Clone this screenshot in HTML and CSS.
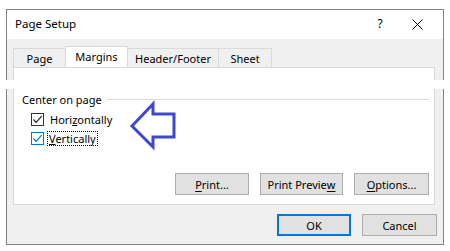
FILE: index.html
```html
<!DOCTYPE html>
<html>
<head>
<meta charset="utf-8">
<link rel="stylesheet" href="styles.css">
</head>
<body>
<div class="dialog">
  <div class="piece piece-top">
    <div class="titlebar">
      <span class="title">Page Setup</span>
      <span class="help">?</span>
      <span class="close">
        <svg width="11" height="11" viewBox="0 0 11 11"><path d="M0.5 0.5 L10.5 10.5 M10.5 0.5 L0.5 10.5" stroke="#000" stroke-width="1" fill="none"/></svg>
      </span>
    </div>
    <div class="tabs">
      <div class="tab tab-first">Page</div>
      <div class="tab tab-active">Margins</div>
      <div class="tab tab-hf">Header/Footer</div>
      <div class="tab tab-sheet">Sheet</div>
    </div>
    <div class="panel panel-top"></div>
  </div>
  <div class="tear"></div>
  <div class="piece piece-bottom">
    <div class="panel panel-bottom">
      <div class="group-head">
        <span class="group-label">Center on page</span>
        <span class="group-line"></span>
      </div>
      <div class="check-row check-first">
        <span class="box"><svg width="11" height="11" viewBox="0 0 11 11"><path d="M1.5 5.5 L4.2 8.3 L9.6 2.2" stroke="#222" stroke-width="1.2" fill="none"/></svg></span>
        <span class="check-label">Hori<u>z</u>ontally</span>
      </div>
      <div class="check-row">
        <span class="box box-blue"><svg width="11" height="11" viewBox="0 0 11 11"><path d="M1.5 5.5 L4.2 8.3 L9.6 2.2" stroke="#0078d7" stroke-width="1.2" fill="none"/></svg></span>
        <span class="check-label focus"><u>V</u>ertically</span>
      </div>
      <svg class="arrow" width="52" height="52" viewBox="0 0 52 52">
        <path d="M4 26 L25 4 L25 14 L46 14 L46 37 L25 37 L25 47 Z" fill="none" stroke="#3f48cc" stroke-width="3" stroke-linejoin="miter"/>
      </svg>
      <div class="panel-buttons">
        <button class="btn btn-print"><u>P</u>rint...</button>
        <button class="btn btn-preview">Print Previe<u>w</u></button>
        <button class="btn btn-options"><u>O</u>ptions...</button>
      </div>
    </div>
    <div class="footer">
      <button class="btn btn-ok">OK</button>
      <button class="btn btn-cancel">Cancel</button>
    </div>
  </div>
</div>
</body>
</html>
```

FILE: styles.css
```css
* { box-sizing: border-box; }
html, body { margin: 0; padding: 0; background: #fff; }
body {
  font-family: "Segoe UI", "Noto Sans", "Open Sans", sans-serif;
  font-size: 11px;
  color: #000;
  width: 450px;
  height: 251px;
  overflow: hidden;
}
.dialog {
  margin: 9px 0 0 6px;
  width: 438px;
}
.piece {
  background: #f0f0f0;
  border-left: 1px solid #828282;
  border-right: 1px solid #828282;
}
.piece-top {
  border-top: 1px solid #828282;
  height: 71px;
  display: flex;
  flex-direction: column;
}
.titlebar {
  background: #fff;
  height: 29px;
  display: flex;
  align-items: center;
  padding-left: 8px;
  flex: none;
  font-size: 12px;
}
.title { flex: 1; padding-bottom: 2px; font-size: 11.5px; }
.help { width: 14px; margin-right: 25px; text-align: center; padding-bottom: 2px; }
.close { width: 12px; margin-right: 19px; display: flex; align-items: center; }
.tabs {
  display: flex;
  align-items: flex-end;
  margin-top: 7px;
  padding-left: 6px;
  height: 21px;
  flex: none;
}
.tab {
  height: 19px;
  border: 1px solid #d9d9d9;
  border-bottom: none;
  background: #f0f0f0;
  display: flex;
  align-items: center;
  justify-content: center;
  margin-left: -1px;
}
.tab-first { width: 53px; margin-left: 0; }
.tab-active {
  height: 21px;
  width: 63px;
  background: #fff;
  position: relative;
  z-index: 1;
  padding-bottom: 2px;
}
.tab-hf { width: 92px; }
.tab-sheet { width: 54px; }
.panel {
  background: #fff;
  border-left: 1px solid #d9d9d9;
  border-right: 1px solid #d9d9d9;
  margin: 0 8px 0 6px;
}
.panel-top {
  border-top: 1px solid #d9d9d9;
  flex: 1;
}
.tear { height: 9px; background: #fff; }
.piece-bottom {
  border-bottom: 1px solid #828282;
  height: 156px;
  display: flex;
  flex-direction: column;
}
.panel-bottom {
  border-bottom: 1px solid #d9d9d9;
  height: 116px;
  position: relative;
  padding: 2px 5px 0 8px;
  display: flex;
  flex-direction: column;
}
.group-head {
  display: flex;
  align-items: center;
  height: 17px;
}
.group-label { flex: none; }
.group-line {
  flex: 1;
  height: 1px;
  background: #dcdcdc;
  margin-left: 5px;
  margin-top: -1px;
}
.check-row {
  display: flex;
  align-items: center;
  height: 19px;
  padding-left: 9px;
}
.check-first { margin-top: 2px; }
.box {
  width: 13px;
  height: 13px;
  border: 1px solid #333;
  background: #fff;
  display: flex;
  align-items: center;
  justify-content: center;
  flex: none;
}
.box-blue { border-color: #0078d7; }
.check-label { margin-left: 4px; padding: 0 1px; line-height: 13px; border: 1px dotted transparent; }
.focus { border: 1px dotted #000; margin-left: 3px; }
.arrow {
  position: absolute;
  left: 114px;
  top: 11px;
}
.panel-buttons {
  display: flex;
  justify-content: flex-end;
  gap: 11px;
  margin-top: auto;
  margin-bottom: 9px;
}
.btn {
  font: inherit;
  color: #000;
  height: 22px;
  background: #e1e1e1;
  border: 1px solid #adadad;
  padding: 0;
  margin: 0;
  display: flex;
  align-items: center;
  justify-content: center;
}
.btn u { text-underline-offset: 2px; }
.btn-print { width: 74px; }
.btn-preview { width: 83px; }
.btn-options { width: 75px; }
.footer {
  display: flex;
  justify-content: flex-end;
  gap: 11px;
  padding-right: 6px;
  margin-top: 9px;
}
.btn-ok {
  width: 74px;
  border: 2px solid #0078d7;
}
.btn-cancel { width: 75px; }
```
